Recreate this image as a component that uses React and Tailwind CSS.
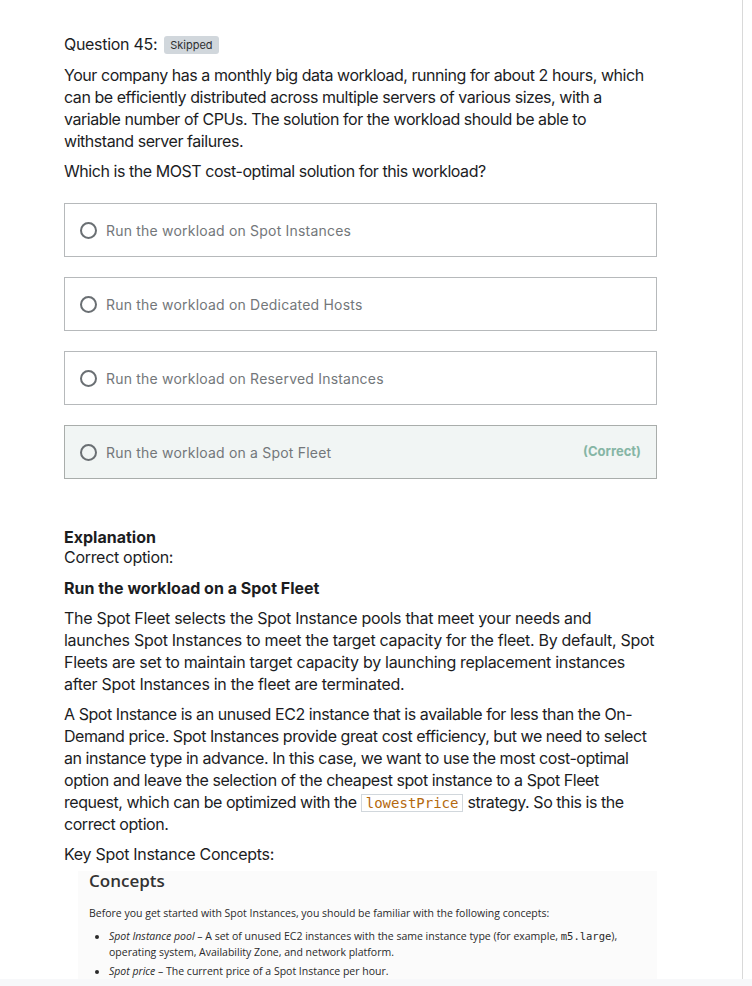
import React from "react";

const options = [
  { text: "Run the workload on Spot Instances" },
  { text: "Run the workload on Dedicated Hosts" },
  { text: "Run the workload on Reserved Instances" },
  { text: "Run the workload on a Spot Fleet", correct: true },
];

export default function App() {
  return (
    <div className="w-[752px] h-[986px] overflow-hidden bg-white flex flex-col" style={{ fontFamily: "Inter, 'Liberation Sans', sans-serif" }}>
      <div className="flex-1 flex overflow-hidden">
        <div className="w-[743px] border-r border-[#d9d9d9] overflow-hidden">
          <div className="pl-[64px] w-[657px] pt-[33px] text-[#1c1d1f]">
            <div className="flex items-center gap-[7px] h-[22px]">
              <span className="text-[16px] tracking-[-0.3px]">Question 45:</span>
              <span className="bg-[#d1d7dc] text-[#2d2f31] text-[11px] leading-[18px] px-[6px] rounded-[3px] mt-[1px]">Skipped</span>
            </div>
            <p className="mt-[9px] text-[16px] leading-[22px] tracking-[-0.45px]">
              Your company has a monthly big data workload, running for about 2 hours, which can be efficiently distributed across multiple servers of various sizes, with a variable number of CPUs. The solution for the workload should be able to withstand server failures.
            </p>
            <p className="mt-[8px] text-[16px] leading-[22px] tracking-[-0.45px]">Which is the MOST cost-optimal solution for this workload?</p>
            <div className="mt-[21px] flex flex-col gap-[20px]">
              {options.map((o, i) => (
                <div
                  key={i}
                  className={`h-[54px] border px-[15px] flex items-center ${o.correct ? "bg-[#f1f5f4] border-[#a9adab]" : "bg-white border-[#b6b9bb]"}`}
                >
                  <span className="w-[17px] h-[17px] rounded-full border-2 border-[#6a6f73] shrink-0"></span>
                  <span className="ml-[9px] text-[14px] text-[#73777a] tracking-[0.2px]">{o.text}</span>
                  {o.correct && <span className="ml-auto text-[13px] font-bold text-[#86b5a5]">(Correct)</span>}
                </div>
              ))}
            </div>
            <div className="mt-[48px] text-[16px] leading-[20px] tracking-[-0.3px]">
              <div className="font-bold tracking-[0px]">Explanation</div>
              <div>Correct option:</div>
              <div className="mt-[10px] font-bold leading-[22px] tracking-[0px]">Run the workload on a Spot Fleet</div>
              <p className="mt-[8px] leading-[22px]">
                The Spot Fleet selects the Spot Instance pools that meet your needs and launches Spot Instances to meet the target capacity for the fleet. By default, Spot Fleets are set to maintain target capacity by launching replacement instances after Spot Instances in the fleet are terminated.
              </p>
              <p className="mt-[8px] leading-[22px] tracking-[-0.45px]">
                A Spot Instance is an unused EC2 instance that is available for less than the On-Demand price. Spot Instances provide great cost efficiency, but we need to select an instance type in advance. In this case, we want to use the most cost-optimal option and leave the selection of the cheapest spot instance to a Spot Fleet request, which can be optimized with the{" "}
                <code className="border border-[#d1d7dc] text-[#b4690e] text-[14px] leading-[16px] px-[4px] tracking-normal" style={{ fontFamily: "'DejaVu Sans Mono', monospace" }}>lowestPrice</code>{" "}
                strategy. So this is the correct option.
              </p>
              <p className="mt-[8px] leading-[22px]">Key Spot Instance Concepts:</p>
              <div className="mt-[6px] ml-[14px] w-[579px] h-[120px] bg-[#fbfbfb] pl-[11px] pt-0 text-[#2a2a2a] tracking-normal" style={{ fontFamily: "'Open Sans', sans-serif" }}>
                <div className="text-[17px] leading-[20px] font-semibold text-[#333]">Concepts</div>
                <div className="mt-[15px] text-[10.5px] leading-[14px]">Before you get started with Spot Instances, you should be familiar with the following concepts:</div>
                <ul className="mt-[8px] text-[10.5px] list-disc pl-[20px] w-[545px]">
                  <li className="leading-[16px]"><i>Spot Instance pool</i> – A set of unused EC2 instances with the same instance type (for example, <span style={{ fontFamily: "'DejaVu Sans Mono', monospace" }}>m5.large</span>),<br />operating system, Availability Zone, and network platform.</li>
                  <li className="mt-[3px] leading-[16px]"><i>Spot price</i> – The current price of a Spot Instance per hour.</li>
                </ul>
              </div>
            </div>
          </div>
        </div>
      </div>
      <div className="h-[7px] bg-[#f7f8fa] shrink-0"></div>
    </div>
  );
}
